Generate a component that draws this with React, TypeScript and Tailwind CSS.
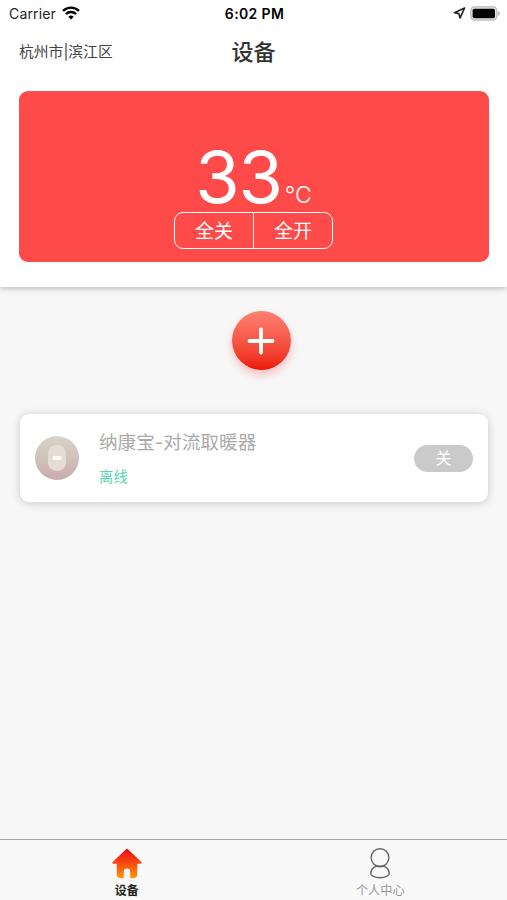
import React from 'react';

function StatusBar() {
  return (
    <div className="flex h-7 items-center pl-[9px] pr-[7px] text-black">
      <div className="flex flex-1 items-center gap-[6px]">
        <span className="text-[14px] leading-7 tracking-[0.15px] text-[#222]">Carrier</span>
        <svg className="-mt-[2px]" width="18" height="14" viewBox="0 0 18 14" fill="none" stroke="#000" strokeWidth="2.4">
          <path d="M1 4.8a11.6 11.6 0 0 1 16 0" />
          <path d="M3.9 8a7.4 7.4 0 0 1 10.2 0" />
          <path d="M9 13.6 6.3 10.8a3.9 3.9 0 0 1 5.4 0Z" fill="#000" stroke="none" />
        </svg>
      </div>
      <span className="text-[14px] font-semibold leading-7 tracking-[0.35px]">6:02 PM</span>
      <div className="-mt-[2px] flex flex-1 items-center justify-end gap-[4px]">
        <svg width="13" height="12" viewBox="0 0 13 12" fill="none" stroke="#222" strokeWidth="1.6" strokeLinejoin="round">
          <path d="M11.6 1 1.4 5.8l4.4.8 1.3 4.3Z" />
        </svg>
        <svg width="30" height="15" viewBox="0 0 30 15">
          <rect x="0.8" y="0.9" width="26" height="13.2" rx="3.8" fill="#e5e5e5" stroke="#bbb" strokeWidth="1.3" />
          <rect x="2.6" y="2.7" width="22.4" height="9.6" rx="1.8" fill="#000" />
          <path d="M28 5.2c2.2.7 2.2 3.9 0 4.6Z" fill="#aaa" />
        </svg>
      </div>
    </div>
  );
}

function TitleBar() {
  return (
    <div className="grid h-[48px] grid-cols-3 items-center px-[19px]">
      <span className="whitespace-nowrap text-[14.8px] text-[#444]">杭州市|滨江区</span>
      <h1 className="text-center text-[22px] font-medium text-[#333]">设备</h1>
    </div>
  );
}

function TemperatureCard() {
  return (
    <section className="ml-[19px] mr-[18px] mt-[15px] flex h-[171px] flex-col items-center rounded-[9px] bg-[#ff4a4a] pr-px pt-[50px] text-white">
      <div className="flex h-[71px] items-baseline leading-[71px]">
        <span className="text-[72px] tracking-[-1.2px]">33</span>
        <span className="ml-[3px] text-[23px] font-[350]">°C</span>
      </div>
      <div className="flex h-[37px] w-[159px] rounded-[9px] border-[1.5px] border-white text-[19px]">
        <button className="flex flex-1 items-center justify-center border-r border-white pt-[3px]">全关</button>
        <button className="flex flex-1 items-center justify-center pt-[3px]">全开</button>
      </div>
    </section>
  );
}

function AddButton() {
  return (
    <button className="ml-[15px] mt-[24px] flex size-[59px] items-center justify-center self-center rounded-full bg-linear-to-b from-[#ff8072] to-[#ec1100] shadow-[0_5px_8px_rgba(255,50,50,0.28)]">
      <svg width="28" height="28" viewBox="0 0 28 28" stroke="#fff" strokeWidth="3.8" strokeLinecap="round">
        <path d="M14 2.5v23M2.5 14h23" />
      </svg>
    </button>
  );
}

function DeviceCard() {
  return (
    <article className="ml-[20px] mr-[19px] mt-[44px] flex h-[88px] items-center rounded-[9px] bg-white pl-[15px] pr-[15px] shadow-[0_1px_10px_rgba(0,0,0,0.19)]">
      <svg width="44" height="44" viewBox="0 0 44 44">
        <defs>
          <linearGradient id="device" x1="0" y1="0" x2="0" y2="1">
            <stop offset="0" stopColor="#d8d4c7" />
            <stop offset="0.5" stopColor="#cfc2bb" />
            <stop offset="1" stopColor="#c8abab" />
          </linearGradient>
        </defs>
        <circle cx="22" cy="22" r="22" fill="url(#device)" />
        <rect x="13" y="9" width="18" height="26" rx="8.5" fill="#e5ddd4" />
        <rect x="17.5" y="20" width="9" height="4" rx="1.8" fill="#fffdf8" />
      </svg>
      <div className="ml-[20px] flex flex-1 flex-col pt-px">
        <span className="h-[34px] text-[18.6px] leading-[34px] text-[#aaa]">纳康宝-对流取暖器</span>
        <span className="h-[34px] text-[14.4px] leading-[35px] text-[#5dd6ae]">离线</span>
      </div>
      <button className="flex h-[27px] w-[59px] items-center justify-center rounded-full bg-[#cacaca] text-[16px] text-white">关</button>
    </article>
  );
}

function TabBar() {
  return (
    <nav className="grid h-[61px] grid-cols-2 border-t-[1.5px] border-[#a5a5a5] bg-[#f9f9f9] pt-[8px]">
      <div className="flex flex-col items-center">
        <svg width="30" height="31" viewBox="0 0 30 31">
          <defs>
            <linearGradient id="house" x1="0" y1="0" x2="0" y2="1">
              <stop offset="0" stopColor="#e50a16" />
              <stop offset="0.5" stopColor="#fb4a10" />
              <stop offset="1" stopColor="#ff970d" />
            </linearGradient>
          </defs>
          <path d="M14 1.2q1-.9 2 0l13.3 12.9q1.2 1.5-.8 1.6h-3.2v10q0 4.6-4.6 4.6h-2.5v-6.4q0-3.3-3.2-3.3t-3.2 3.3v6.4H9.3q-4.6 0-4.6-4.6v-10H1.5q-2-.1-.8-1.6Z" fill="url(#house)" />
        </svg>
        <span className="mt-[3px] h-[18px] text-[12px] font-semibold leading-[18px] text-[#222]">设备</span>
      </div>
      <div className="flex flex-col items-center">
        <svg width="22" height="31" viewBox="0 0 22 31" fill="none" stroke="#666" strokeWidth="1.4">
          <circle cx="11" cy="9.6" r="8.9" />
          <path d="M8 18C4.6 19 1.9 22 1.7 25.8c0 1.8 4.3 3.9 9.3 3.9s9.3-2.1 9.3-3.9C20.1 22 17.4 19 14 18q-3 1-6 0Z" />
        </svg>
        <span className="mt-[3px] h-[18px] text-[12.2px] leading-[18px] text-[#999]">个人中心</span>
      </div>
    </nav>
  );
}

export default function App() {
  return (
    <div className="flex h-[900px] w-full flex-col overflow-hidden bg-[#f7f7f7] font-['Inter','Noto_Sans_CJK_SC',sans-serif]">
      <header className="h-[287px] shrink-0 bg-white shadow-[0_1px_6px_rgba(0,0,0,0.28)]">
        <StatusBar />
        <TitleBar />
        <TemperatureCard />
      </header>
      <main className="flex flex-1 flex-col">
        <AddButton />
        <DeviceCard />
      </main>
      <TabBar />
    </div>
  );
}
